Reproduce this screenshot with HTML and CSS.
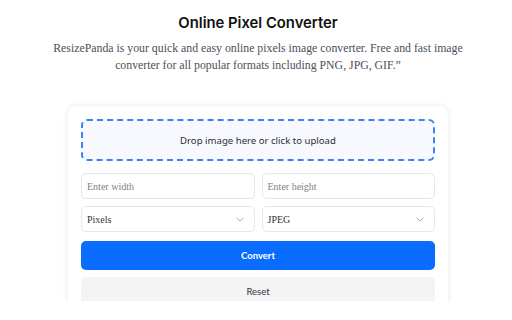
FILE: index.html
```html
<!DOCTYPE html>
<html>
<head>
<meta charset="utf-8">
<link rel="stylesheet" href="styles.css">
</head>
<body>
<div class="page">
  <h1 class="title">Online Pixel Converter</h1>
  <p class="intro">ResizePanda is your quick and easy online pixels image converter. Free and fast image converter for all popular formats including PNG, JPG, GIF.”</p>
  <div class="card">
    <div class="drop">Drop image here or click to upload</div>
    <div class="row">
      <div class="field placeholder">Enter width</div>
      <div class="field placeholder">Enter height</div>
    </div>
    <div class="row">
      <div class="field select">Pixels<svg class="chev" viewBox="0 0 8 5" width="8" height="5"><path d="M0.5 0.7 L4 4.2 L7.5 0.7" fill="none" stroke="#a3a8b0" stroke-width="1"/></svg></div>
      <div class="field select">JPEG<svg class="chev" viewBox="0 0 8 5" width="8" height="5"><path d="M0.5 0.7 L4 4.2 L7.5 0.7" fill="none" stroke="#a3a8b0" stroke-width="1"/></svg></div>
    </div>
    <div class="btn primary">Convert</div>
    <div class="btn secondary">Reset</div>
  </div>
</div>
</body>
</html>
```
FILE: styles.css
```css
html, body {
  margin: 0;
  padding: 0;
  background: #ffffff;
}
.page {
  padding: 0 0 0 4px;
  display: flex;
  flex-direction: column;
  align-items: center;
  height: 301px;
  overflow: hidden;
}
.title {
  font-family: Inter, "Noto Sans", sans-serif;
  font-weight: 600;
  font-size: 14.8px;
  line-height: 20px;
  color: #111111;
  margin: 13px 0 0 0;
}
.intro {
  font-family: "Liberation Serif", serif;
  font-size: 11.8px;
  line-height: 17px;
  color: #4b4f58;
  text-align: center;
  width: 420px;
  margin: 7px 0 0 0;
}
.card {
  width: 354px;
  padding: 13px 13px 20px 13px;
  margin-top: 31px;
  background: #ffffff;
  border-radius: 9px;
  box-shadow: 0 0 6px rgba(0, 0, 0, 0.06);
  border: 1px solid #f3f4f6;
  display: flex;
  flex-direction: column;
  flex-shrink: 0;
}
.drop {
  height: 38px;
  border: 2px dashed #3b82f6;
  border-radius: 6px;
  background: #f7f9ff;
  display: flex;
  align-items: center;
  justify-content: center;
  font-family: "Noto Sans", "Open Sans", sans-serif;
  font-size: 9.6px;
  color: #2b2f36;
}
.row {
  display: flex;
  gap: 7px;
  margin-top: 12px;
}
.row + .row {
  margin-top: 7px;
}
.field {
  flex: 1;
  height: 24px;
  border: 1px solid #e5e7eb;
  border-radius: 5px;
  display: flex;
  align-items: center;
  padding: 0 10px 0 5px;
  font-family: "Liberation Serif", serif;
  font-size: 10px;
}
.placeholder {
  color: #7b7f88;
}
.select {
  color: #333333;
  justify-content: space-between;
}
.chev {
  display: block;
}
.btn {
  height: 29px;
  border-radius: 5px;
  display: flex;
  align-items: center;
  justify-content: center;
  font-family: Lato, "Noto Sans", sans-serif;
  font-size: 9.5px;
}
.primary {
  margin-top: 9px;
  background: #0a6cff;
  color: #ffffff;
  font-weight: 700;
}
.secondary {
  margin-top: 7px;
  background: #f3f4f6;
  color: #333333;
}
```
